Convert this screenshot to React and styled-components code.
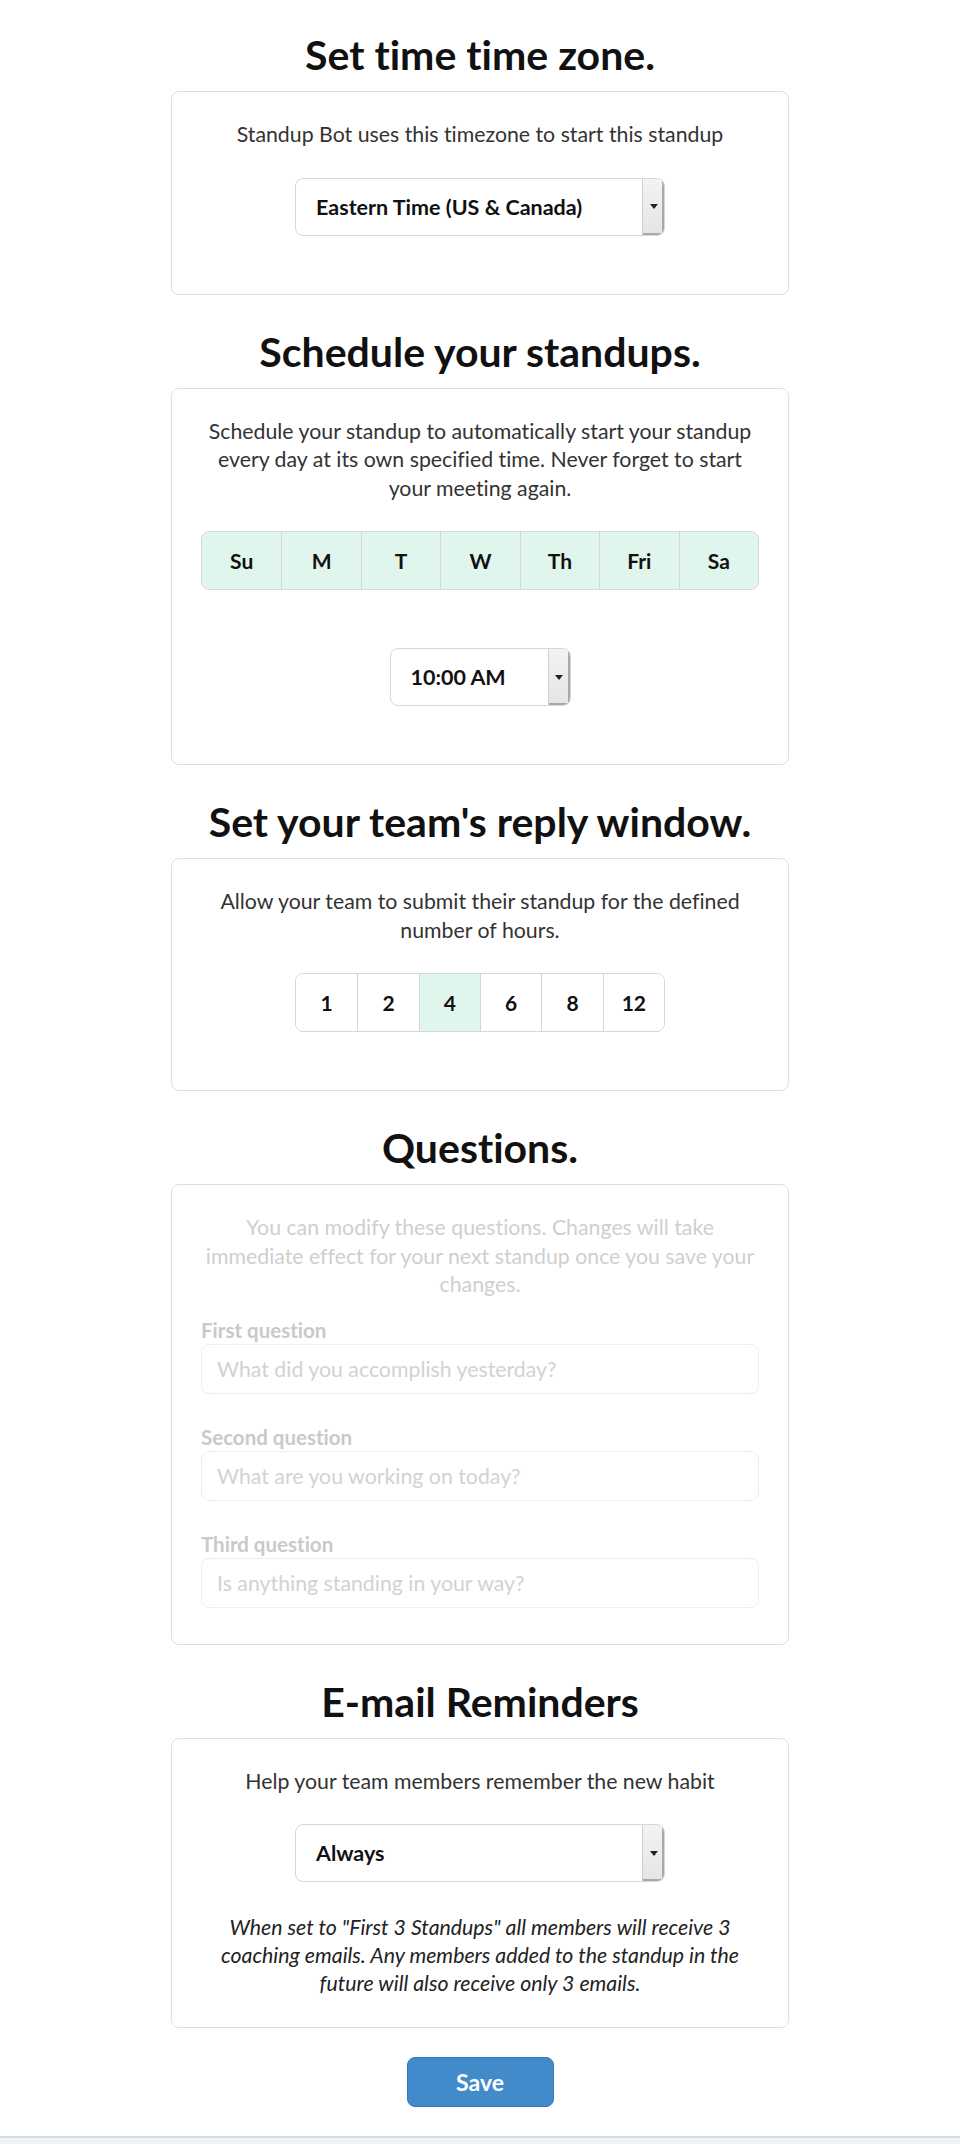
import React from 'react'
import styled, { createGlobalStyle } from 'styled-components'

const GlobalStyle = createGlobalStyle`
  body {
    margin: 0;
    background: #fff;
    font-family: Lato, "Open Sans", sans-serif;
    font-variant-ligatures: none;
    color: #333;
  }
`

const DAYS = ['Su', 'M', 'T', 'W', 'Th', 'Fri', 'Sa']
const HOURS = [1, 2, 4, 6, 8, 12]
const QUESTIONS = [
  { label: 'First question', placeholder: 'What did you accomplish yesterday?' },
  { label: 'Second question', placeholder: 'What are you working on today?' },
  { label: 'Third question', placeholder: 'Is anything standing in your way?' }
]

const Select = ({ value, width }) => (
  <SelectBox $width={width}>
    <SelectValue>{value}</SelectValue>
    <SelectArrow>
      <svg width="8" height="5" viewBox="0 0 8 5">
        <path d="M0 0 L8 0 L4 5 Z" fill="#222" />
      </svg>
    </SelectArrow>
  </SelectBox>
)

class App extends React.Component {
  render () {
    return (
      <Page>
        <GlobalStyle />
        <Main>
          <Title>Set time time zone.</Title>
          <Card>
            <Text>Standup Bot uses this timezone to start this standup</Text>
            <Select value="Eastern Time (US & Canada)" width={370} />
            <Spacer />
          </Card>

          <Title>Schedule your standups.</Title>
          <Card>
            <Text>
              Schedule your standup to automatically start your standup<br />
              every day at its own specified time. Never forget to start<br />
              your meeting again.
            </Text>
            <DayRow>
              {DAYS.map(d => <Toggle key={d} $active>{d}</Toggle>)}
            </DayRow>
            <TimeGap />
            <Select value="10:00 AM" width={181} />
            <Spacer />
          </Card>

          <Title>Set your team's reply window.</Title>
          <Card>
            <Text>
              Allow your team to submit their standup for the defined<br />
              number of hours.
            </Text>
            <HourRow>
              {HOURS.map(h => <Toggle key={h} $active={h === 4}>{h}</Toggle>)}
            </HourRow>
            <Spacer />
          </Card>

          <Title>Questions.</Title>
          <Card>
            <Text $faded>
              You can modify these questions. Changes will take<br />
              immediate effect for your next standup once you save your<br />
              changes.
            </Text>
            <Questions>
              {QUESTIONS.map(q => (
                <Field key={q.label}>
                  <Label>{q.label}</Label>
                  <Input placeholder={q.placeholder} readOnly />
                </Field>
              ))}
            </Questions>
          </Card>

          <Title>E-mail Reminders</Title>
          <Card>
            <Text>Help your team members remember the new habit</Text>
            <Select value="Always" width={370} />
            <Note>
              When set to "First 3 Standups" all members will receive 3<br />
              coaching emails. Any members added to the standup in the<br />
              future will also receive only 3 emails.
            </Note>
          </Card>

          <SaveButton>Save</SaveButton>
        </Main>
        <Footer />
      </Page>
    )
  }
}

const Page = styled.div`
  min-height: 2200px;
  display: flex;
  flex-direction: column;
`

const Main = styled.main`
  display: flex;
  flex-direction: column;
  align-items: center;
  padding-top: 33px;
  padding-bottom: 29px;
`

const Title = styled.h2`
  margin: 35px 0 14px;
  font-size: 41px;
  line-height: 44px;
  font-weight: 700;
  color: #111;
  text-align: center;
  &:first-child {
    margin-top: 0;
  }
`

const Card = styled.section`
  box-sizing: border-box;
  width: 618px;
  padding: 28px 10px 30px;
  border: 1.5px solid #dedede;
  border-radius: 8px;
  display: flex;
  flex-direction: column;
  align-items: center;
`

const Text = styled.p`
  margin: 0 0 ${p => p.$faded ? '19px' : '29px'};
  font-size: 21.3px;
  line-height: 28.5px;
  text-align: center;
  white-space: nowrap;
  color: ${p => p.$faded ? '#cfcfcf' : '#333'};
`

const Spacer = styled.div`
  height: 28px;
`

const TimeGap = styled.div`
  height: 58px;
`

const SelectBox = styled.div`
  box-sizing: border-box;
  width: ${p => p.$width}px;
  height: 58px;
  display: flex;
  align-items: stretch;
  border: 1.5px solid #d8d8d8;
  border-radius: 8px;
  overflow: hidden;
  background: #fff;
`

const SelectValue = styled.div`
  flex: 1;
  display: flex;
  align-items: center;
  padding-left: 20px;
  font-size: 21.5px;
  font-weight: 700;
  color: #111;
`

const SelectArrow = styled.div`
  width: 21px;
  display: flex;
  align-items: center;
  justify-content: center;
  background: linear-gradient(#f3f3f3, #e5e5e5);
  border-left: 1px solid #cfcfcf;
  box-shadow: inset -2px -2px 0 #a9a9a9;
`

const ToggleGroup = styled.div`
  box-sizing: border-box;
  display: grid;
  border: 1.5px solid #d6d6d6;
  border-radius: 8px;
  overflow: hidden;
`

const DayRow = styled(ToggleGroup)`
  width: 558px;
  grid-template-columns: repeat(7, 1fr);
`

const HourRow = styled(ToggleGroup)`
  width: 370px;
  grid-template-columns: repeat(6, 1fr);
`

const Toggle = styled.div`
  height: 57px;
  display: flex;
  align-items: center;
  justify-content: center;
  font-size: 21px;
  font-weight: 700;
  color: #111;
  background: ${p => p.$active ? '#e0f5ec' : '#fff'};
  & + & {
    border-left: 1.5px solid #d6d6d6;
  }
`

const Questions = styled.div`
  width: 558px;
  padding-bottom: 6px;
  display: flex;
  flex-direction: column;
  gap: 31px;
`

const Field = styled.div`
  display: flex;
  flex-direction: column;
  gap: 2px;
`

const Label = styled.label`
  font-size: 20.5px;
  line-height: 24px;
  font-weight: 700;
  color: #c9c9c9;
`

const Input = styled.input`
  box-sizing: border-box;
  height: 50px;
  padding: 0 15px;
  border: 1.5px solid #efefef;
  border-radius: 8px;
  font-family: inherit;
  font-size: 21.3px;
  outline: none;
  &::placeholder {
    color: #d2d2d2;
  }
`

const Note = styled.p`
  margin: 31px 0 0;
  font-size: 21.3px;
  line-height: 28px;
  font-style: italic;
  text-align: center;
  white-space: nowrap;
  color: #222;
`

const SaveButton = styled.button`
  margin-top: 29px;
  width: 147px;
  height: 50px;
  border: 1.5px solid #3677b5;
  border-radius: 8px;
  background: #428bca;
  color: #fff;
  font-family: inherit;
  font-size: 23px;
  font-weight: 700;
`

const Footer = styled.footer`
  height: 60px;
  border-top: 2px solid #d5dadf;
  background: #eef2f5;
`

export default App
